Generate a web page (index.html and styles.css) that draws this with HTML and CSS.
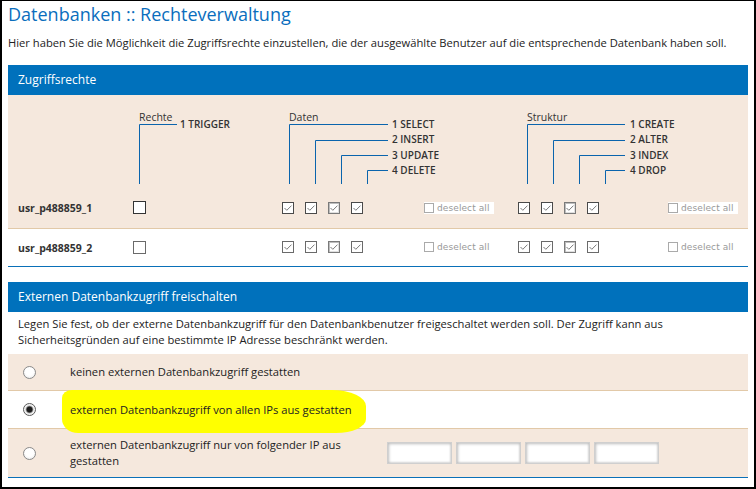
FILE: index.html
```html
<!DOCTYPE html>
<html lang="de">
<head>
<meta charset="utf-8">
<title>Datenbanken :: Rechteverwaltung</title>
<link rel="stylesheet" href="styles.css">
</head>
<body>
<div class="frame">
  <h1 class="title">Datenbanken :: Rechteverwaltung</h1>
  <p class="intro">Hier haben Sie die Möglichkeit die Zugriffsrechte einzustellen, die der ausgewählte Benutzer auf die entsprechende Datenbank haben soll.</p>

  <section class="panel">
    <div class="panel-head">Zugriffsrechte</div>
    <div class="cols diagram-row">
      <div></div>
      <div class="diag diag-rechte">
        <div class="diag-title">Rechte</div>
        <div class="diag-body">
          <svg class="lines" width="44" height="60" viewBox="0 0 44 60"><path d="M6.5 60V0.5H44"/></svg>
          <ul class="ops ops-rechte"><li>1 TRIGGER</li></ul>
        </div>
      </div>
      <div class="diag diag-daten">
        <div class="diag-title">Daten</div>
        <div class="diag-body">
          <svg class="lines" width="106" height="60" viewBox="0 0 106 60"><path d="M7.5 60V0.5H106M33.5 60V16.5H106M59.5 60V31.5H106M85.5 60V46.5H106"/></svg>
          <ul class="ops"><li>1 SELECT</li><li>2 INSERT</li><li>3 UPDATE</li><li>4 DELETE</li></ul>
        </div>
      </div>
      <div class="diag diag-struktur">
        <div class="diag-title">Struktur</div>
        <div class="diag-body">
          <svg class="lines" width="107" height="60" viewBox="0 0 107 60"><path d="M9.5 60V0.5H107M35.5 60V16.5H107M61.5 60V31.5H107M87.5 60V46.5H107"/></svg>
          <ul class="ops ops-struktur"><li>1 CREATE</li><li>2 ALTER</li><li>3 INDEX</li><li>4 DROP</li></ul>
        </div>
      </div>
    </div>

    <div class="cols user-row user-row-1">
      <div class="uname">usr_p488859_1</div>
      <div><span class="cb big"></span></div>
      <div class="cb-group">
        <span class="cb"><svg viewBox="0 0 10 10"><path d="M1.5 5 3.8 7.3 8.5 2.6"/></svg></span>
        <span class="cb"><svg viewBox="0 0 10 10"><path d="M1.5 5 3.8 7.3 8.5 2.6"/></svg></span>
        <span class="cb f"><svg viewBox="0 0 10 10"><path d="M1.5 5 3.8 7.3 8.5 2.6"/></svg></span>
        <span class="cb"><svg viewBox="0 0 10 10"><path d="M1.5 5 3.8 7.3 8.5 2.6"/></svg></span>
      </div>
      <div><span class="deselect"><span class="cb-s"></span>deselect all</span></div>
      <div class="cb-group">
        <span class="cb"><svg viewBox="0 0 10 10"><path d="M1.5 5 3.8 7.3 8.5 2.6"/></svg></span>
        <span class="cb"><svg viewBox="0 0 10 10"><path d="M1.5 5 3.8 7.3 8.5 2.6"/></svg></span>
        <span class="cb f"><svg viewBox="0 0 10 10"><path d="M1.5 5 3.8 7.3 8.5 2.6"/></svg></span>
        <span class="cb"><svg viewBox="0 0 10 10"><path d="M1.5 5 3.8 7.3 8.5 2.6"/></svg></span>
      </div>
      <div><span class="deselect"><span class="cb-s"></span>deselect all</span></div>
    </div>

    <div class="cols user-row user-row-2">
      <div class="uname">usr_p488859_2</div>
      <div><span class="cb big light"></span></div>
      <div class="cb-group">
        <span class="cb light"><svg viewBox="0 0 10 10"><path d="M1.5 5 3.8 7.3 8.5 2.6"/></svg></span>
        <span class="cb light"><svg viewBox="0 0 10 10"><path d="M1.5 5 3.8 7.3 8.5 2.6"/></svg></span>
        <span class="cb light f"><svg viewBox="0 0 10 10"><path d="M1.5 5 3.8 7.3 8.5 2.6"/></svg></span>
        <span class="cb light"><svg viewBox="0 0 10 10"><path d="M1.5 5 3.8 7.3 8.5 2.6"/></svg></span>
      </div>
      <div><span class="deselect"><span class="cb-s"></span>deselect all</span></div>
      <div class="cb-group">
        <span class="cb light"><svg viewBox="0 0 10 10"><path d="M1.5 5 3.8 7.3 8.5 2.6"/></svg></span>
        <span class="cb light"><svg viewBox="0 0 10 10"><path d="M1.5 5 3.8 7.3 8.5 2.6"/></svg></span>
        <span class="cb light f"><svg viewBox="0 0 10 10"><path d="M1.5 5 3.8 7.3 8.5 2.6"/></svg></span>
        <span class="cb light"><svg viewBox="0 0 10 10"><path d="M1.5 5 3.8 7.3 8.5 2.6"/></svg></span>
      </div>
      <div><span class="deselect"><span class="cb-s"></span>deselect all</span></div>
    </div>
  </section>

  <section class="panel panel-ext">
    <div class="panel-head">Externen Datenbankzugriff freischalten</div>
    <p class="ext-desc">Legen Sie fest, ob der externe Datenbankzugriff für den Datenbankbenutzer freigeschaltet werden soll. Der Zugriff kann aus<br>Sicherheitsgründen auf eine bestimmte IP Adresse beschränkt werden.</p>
    <div class="opt opt-1">
      <span class="radio"></span>
      <span class="opt-label">keinen externen Datenbankzugriff gestatten</span>
    </div>
    <div class="opt opt-2">
      <span class="radio on"></span>
      <span class="opt-label"><span class="marker">externen Datenbankzugriff von allen IPs aus gestatten</span></span>
    </div>
    <div class="opt opt-3">
      <span class="radio"></span>
      <span class="opt-label opt-label-ip">externen Datenbankzugriff nur von folgender IP aus<br>gestatten</span>
      <div class="ip-fields">
        <input class="ip" type="text">
        <input class="ip" type="text">
        <input class="ip" type="text">
        <input class="ip" type="text">
      </div>
    </div>
  </section>
</div>
</body>
</html>
```

FILE: styles.css
```css
* { box-sizing: border-box; }
html, body { margin: 0; padding: 0; background: #fff; }
body {
  font-family: "Open Sans", "Noto Sans", sans-serif;
  font-size: 11px;
  color: #222;
}
.frame {
  width: 756px;
  height: 489px;
  border-style: solid;
  border-color: #000;
  border-width: 1px 2px 2px 2px;
  padding: 1px 6px 0;
  overflow: hidden;
}
.title {
  margin: 0;
  font-size: 18px;
  line-height: 24px;
  font-weight: 400;
  color: #0a6ebd;
}
.intro {
  margin: 9px 0 14px;
  font-size: 11.2px;
  line-height: 16px;
  white-space: nowrap;
}
.panel { border-bottom: 1px solid #0a70b8; }
.panel-head {
  background: #0071bc;
  color: #fff;
  height: 30px;
  line-height: 30px;
  padding-left: 10px;
  font-size: 12px;
}
.cols {
  display: grid;
  grid-template-columns: 125px 149px 142px 94px 150px 80px;
}
.diagram-row {
  background: #f5e8dd;
  padding: 15px 0 4px;
}
.diag-daten { grid-column: 3 / 5; }
.diag-struktur { grid-column: 5 / 7; }
.diag-title {
  font-size: 10.5px;
  line-height: 14px;
  height: 14px;
  color: #333;
}
.diag-rechte .diag-title { padding-left: 6px; }
.diag-daten .diag-title { padding-left: 7px; }
.diag-struktur .diag-title { padding-left: 9px; }
.diag-body { display: flex; align-items: flex-start; }
.lines { display: block; flex: none; }
.lines path { fill: none; stroke: #0a64ad; stroke-width: 1; }
.ops {
  list-style: none;
  margin: -7px 0 0 4px;
  padding: 0;
  font-size: 10px;
  font-weight: 600;
  line-height: 15.3px;
  color: #333;
  white-space: nowrap;
}
.ops-rechte { margin-left: 3px; }
.ops-struktur { margin-left: 5px; }

.user-row { align-items: center; }
.user-row-1 {
  height: 41px;
  background: #f5e8dd;
  border-bottom: 1px solid #e2c9a8;
}
.user-row-2 { height: 37px; background: #fff; }
.uname {
  padding-left: 10px;
  font-weight: 700;
  font-size: 10.5px;
  color: #333;
}
.cb-group { display: flex; gap: 11px; }
.cb {
  display: flex;
  align-items: center;
  justify-content: center;
  width: 12px;
  height: 12px;
  border: 1px solid #4a4a4a;
  background: #fff;
}
.cb svg { width: 10px; height: 10px; display: block; }
.cb svg path { fill: none; stroke: #7a7a7a; stroke-width: 1; }
.cb.big { width: 13px; height: 13px; border-color: #333; }
.user-row-1 .cb.big { margin-bottom: 1px; }
.user-row-2 .cb-group { padding-bottom: 1px; }
.user-row-2 .deselect { margin-bottom: 1px; }
.cb.light { border-color: #6a6a6a; }
.cb.f { border-color: #7a7a7a; box-shadow: inset 1px 1px 0 #bdbdbd, inset -1px -1px 0 #e0e0e0; }
.deselect {
  display: inline-flex;
  align-items: center;
  gap: 3px;
  height: 12px;
  padding-right: 4px;
  background: #fff;
  font-family: "DejaVu Sans", Verdana, sans-serif;
  font-size: 9px;
  letter-spacing: 0.1px;
  color: #999;
  white-space: nowrap;
}
.cb-s {
  width: 10px;
  height: 10px;
  border: 1px solid #aaa;
  background: #fff;
}

.panel-ext { margin-top: 15px; }
.ext-desc {
  margin: 0;
  padding: 4px 10px 6px;
  font-size: 11.2px;
  line-height: 16px;
  white-space: nowrap;
}
.opt {
  display: flex;
  align-items: center;
  padding-left: 15px;
  border-bottom: 1px solid #e2c9a8;
}
.opt-1 { height: 37px; background: #f5e8dd; }
.opt-2 { height: 38px; background: #fff; }
.opt-3 { height: 48px; background: #f5e8dd; border-bottom: none; }
.radio {
  flex: none;
  width: 13px;
  height: 13px;
  border-radius: 50%;
  border: 1px solid #8a8a8a;
  background: radial-gradient(circle at 50% 40%, #fff 45%, #e6e6e6 100%);
  margin-right: 34px;
}
.radio.on {
  border-color: #5a5a5a;
  background: radial-gradient(circle, #1c1c1c 0 2.6px, #777 3.2px, #e9e9e9 4.2px, #fff 6px);
}
.opt-label { font-size: 11.2px; line-height: 16px; white-space: nowrap; color: #222; }
.marker {
  position: relative;
  z-index: 1;
  display: inline-block;
  background: #ffff00;
  padding: 12px 14px 15px 8px;
  margin: -12px -14px -15px -8px;
  border-radius: 10px 34px 30px 16px / 8px 16px 14px 14px;
}
.opt-label-ip { flex: 0 0 310px; }
.ip-fields { display: flex; gap: 4px; margin-left: 7px; }
.ip {
  width: 65px;
  height: 22px;
  margin: 0;
  padding: 0;
  border: 1px solid #cfcfcf;
  background: #fff;
  box-shadow: inset 1px 1px 3px #bdbdbd, inset -1px -1px 2px #dcdcdc;
}
```
